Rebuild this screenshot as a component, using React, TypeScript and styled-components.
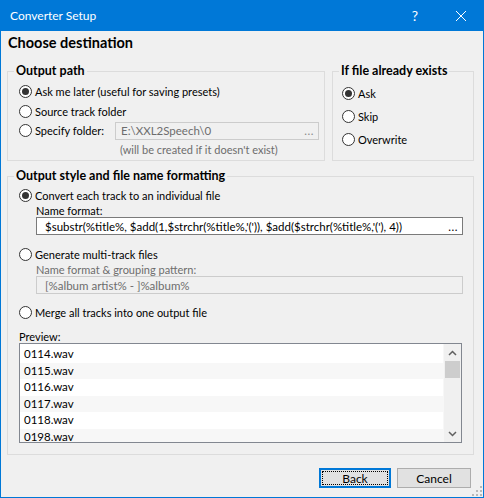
import React from "react";
import styled, { createGlobalStyle } from "styled-components";

const GlobalStyle = createGlobalStyle`
  html, body { margin: 0; padding: 0; background: #ffffff; }
  body { font-family: Lato, "Liberation Sans", sans-serif; font-size: 11px; color: #000; }
  * { box-sizing: border-box; }
`;

const Window = styled.div`
  position: relative;
  width: 484px;
  height: 498px;
  border: 1px solid #0078d7;
  border-top: none;
  background: #f0f0f0;
  display: flex;
  flex-direction: column;
`;

const TitleBar = styled.div`
  height: 31px;
  margin: 0 -1px;
  background: #0078d7;
  color: #fff;
  display: flex;
  align-items: center;
`;

const TitleText = styled.div`
  flex: 1;
  padding-left: 10px;
  font-size: 12px;
`;

const TitleButton = styled.div`
  width: 46px;
  height: 31px;
  display: flex;
  align-items: center;
  justify-content: center;
  font-size: 14px;
`;

const Content = styled.div`
  flex: 1;
  display: flex;
  flex-direction: column;
  padding: 0 9px 0 6px;
`;

const Heading = styled.div`
  margin-top: 4px;
  padding-left: 1px;
  height: 16px;
  line-height: 16px;
  font-size: 14.5px;
  font-weight: bold;
`;

const TopRow = styled.div`
  display: flex;
  gap: 7px;
  margin-top: 12px;
`;

const Group = styled.fieldset<{ $width?: number; $top?: number; $grow?: boolean }>`
  margin: ${(p) => p.$top ?? 0}px 0 0 0;
  padding: 0;
  min-width: 0;
  border: 1px solid #dcdcdc;
  ${(p) => (p.$width ? `width: ${p.$width}px;` : "")}
  ${(p) => (p.$grow ? "flex: 1;" : "")}
`;

const Legend = styled.legend`
  margin-left: 6px;
  padding: 0 2px;
  height: 16px;
  line-height: 16px;
  font-size: 12.5px;
  font-weight: bold;
`;

const GroupBody = styled.div<{ $pl: number; $pr?: number; $pt?: number; $pb?: number }>`
  display: flex;
  flex-direction: column;
  padding: ${(p) => p.$pt ?? 0}px ${(p) => p.$pr ?? 0}px ${(p) => p.$pb ?? 0}px ${(p) => p.$pl}px;
`;

const RadioRow = styled.div<{ $h: number; $top?: number }>`
  display: flex;
  align-items: center;
  gap: 3px;
  height: ${(p) => p.$h}px;
  margin-top: ${(p) => p.$top ?? 0}px;
  white-space: nowrap;
`;

const Circle = styled.span<{ $on?: boolean }>`
  width: 13px;
  height: 13px;
  flex: none;
  border-radius: 50%;
  border: 1px solid #333;
  background: #fff;
  display: inline-flex;
  align-items: center;
  justify-content: center;
  &::after {
    content: "";
    width: 7px;
    height: 7px;
    border-radius: 50%;
    background: ${(p) => (p.$on ? "#333" : "transparent")};
  }
`;

const FolderLabel = styled.span`
  width: 80px;
`;

const Field = styled.div<{ $disabled?: boolean; $pl: number; $width?: number }>`
  height: 18px;
  ${(p) => (p.$width ? `width: ${p.$width}px;` : "")}
  flex: ${(p) => (p.$width ? "none" : "1")};
  border: 1px solid ${(p) => (p.$disabled ? "#cccccc" : "#7a7a7a")};
  background: ${(p) => (p.$disabled ? "#f0f0f0" : "#ffffff")};
  color: ${(p) => (p.$disabled ? "#6d6d6d" : "#000")};
  display: flex;
  align-items: center;
  padding: 0 4px 0 ${(p) => p.$pl}px;
  font-size: 11.5px;
  white-space: nowrap;
  overflow: hidden;
`;

const FieldText = styled.span`
  flex: 1;
  overflow: hidden;
`;

const Dots = styled.span<{ $disabled?: boolean }>`
  color: ${(p) => (p.$disabled ? "#8a8a8a" : "#000")};
  letter-spacing: 0.5px;
`;

const Note = styled.div`
  height: 20px;
  line-height: 20px;
  padding-left: 101px;
  color: #6d6d6d;
`;

const Indented = styled.div<{ $grey?: boolean }>`
  margin-left: 17px;
  height: 13px;
  line-height: 13px;
  color: ${(p) => (p.$grey ? "#6d6d6d" : "#000")};
`;

const FieldRow = styled.div`
  margin-left: 17px;
  display: flex;
`;

const SmallLabel = styled.div`
  margin-top: 9px;
  height: 13px;
  line-height: 13px;
`;

const ListBox = styled.div`
  height: 100px;
  margin-right: 1px;
  border: 1px solid #828790;
  background: #fff;
  display: flex;
  overflow: hidden;
`;

const Rows = styled.div`
  flex: 1;
  padding-top: 2px;
  border-right: 1px solid #f7f7f7;
`;

const Row = styled.div<{ $alt: boolean }>`
  height: 16.5px;
  line-height: 16.5px;
  padding-left: 4px;
  font-size: 11.5px;
  background: ${(p) => (p.$alt ? "#f7f7f7" : "#fff")};
`;

const ScrollBar = styled.div`
  width: 17px;
  background: #f0f0f0;
  display: flex;
  flex-direction: column;
  align-items: center;
`;

const ArrowBox = styled.div`
  height: 17px;
  width: 17px;
  display: flex;
  align-items: center;
  justify-content: center;
`;

const Thumb = styled.div`
  width: 15px;
  height: 17px;
  background: #cdcdcd;
`;

const Track = styled.div`
  flex: 1;
`;

const Footer = styled.div`
  display: flex;
  justify-content: flex-end;
  gap: 6px;
  margin-top: 13px;
  margin-right: 3px;
`;

const Button = styled.div<{ $focused?: boolean; $width: number }>`
  width: ${(p) => p.$width}px;
  height: 20px;
  background: #e1e1e1;
  border: 1px solid ${(p) => (p.$focused ? "#0078d7" : "#adadad")};
  ${(p) => (p.$focused ? "box-shadow: inset 0 0 0 1px #0078d7;" : "")}
  padding: 2px;
  display: flex;
`;

const ButtonFace = styled.div<{ $focused?: boolean }>`
  flex: 1;
  display: flex;
  align-items: center;
  justify-content: center;
  border: 1px dotted ${(p) => (p.$focused ? "#000" : "transparent")};
  font-size: 12px;
`;

const Grip = styled.svg`
  position: absolute;
  right: 1px;
  bottom: 1px;
`;

const Chevron = ({ up }: { up?: boolean }) => (
  <svg width="9" height="6" viewBox="0 0 9 6">
    <path
      d={up ? "M1 5 L4.5 1.5 L8 5" : "M1 1 L4.5 4.5 L8 1"}
      fill="none"
      stroke="#606060"
      strokeWidth="1.5"
    />
  </svg>
);

const Radio = ({ on, h, top, children }: { on?: boolean; h: number; top?: number; children: React.ReactNode }) => (
  <RadioRow $h={h} $top={top}>
    <Circle $on={on} />
    {children}
  </RadioRow>
);

const files = ["0114.wav", "0115.wav", "0116.wav", "0117.wav", "0118.wav", "0198.wav"];

export default function App() {
  return (
    <>
      <GlobalStyle />
      <Window>
        <TitleBar>
          <TitleText>Converter Setup</TitleText>
          <TitleButton>?</TitleButton>
          <TitleButton>
            <svg width="10" height="10" viewBox="0 0 10 10">
              <path d="M0 0 L10 10 M10 0 L0 10" stroke="#fff" strokeWidth="1" />
            </svg>
          </TitleButton>
        </TitleBar>
        <Content>
          <Heading>Choose destination</Heading>
          <TopRow>
            <Group $width={318}>
              <Legend>Output path</Legend>
              <GroupBody $pl={11} $pr={5} $pt={2}>
                <Radio on h={20}>Ask me later (useful for saving presets)</Radio>
                <Radio h={20}>Source track folder</Radio>
                <Radio h={19}>
                  <FolderLabel>Specify folder:</FolderLabel>
                  <Field $disabled $pl={5} $width={204}>
                    <FieldText>E:\XXL2Speech\0</FieldText>
                    <Dots $disabled>...</Dots>
                  </Field>
                </Radio>
                <Note>(will be created if it doesn't exist)</Note>
              </GroupBody>
            </Group>
            <Group $grow>
              <Legend>If file already exists</Legend>
              <GroupBody $pl={9} $pt={3}>
                <Radio on h={23}>Ask</Radio>
                <Radio h={23}>Skip</Radio>
                <Radio h={23}>Overwrite</Radio>
              </GroupBody>
            </Group>
          </TopRow>
          <Group $top={7}>
            <Legend>Output style and file name formatting</Legend>
            <GroupBody $pl={11} $pr={10} $pt={2} $pb={11}>
              <Radio on h={18}>Convert each track to an individual file</Radio>
              <Indented>Name format:</Indented>
              <FieldRow>
                <Field $pl={8}>
                  <FieldText>$substr(%title%, $add(1,$strchr(%title%,'(')), $add($strchr(%title%,'('), 4))</FieldText>
                  <Dots>...</Dots>
                </Field>
              </FieldRow>
              <Radio h={18} top={10}>Generate multi-track files</Radio>
              <Indented $grey>Name format &amp; grouping pattern:</Indented>
              <FieldRow>
                <Field $disabled $pl={8}>
                  <FieldText>[%album artist% - ]%album%</FieldText>
                </Field>
              </FieldRow>
              <Radio h={18} top={9}>Merge all tracks into one output file</Radio>
              <SmallLabel>Preview:</SmallLabel>
              <ListBox>
                <Rows>
                  {files.map((f, i) => (
                    <Row key={f} $alt={i % 2 === 1}>{f}</Row>
                  ))}
                </Rows>
                <ScrollBar>
                  <ArrowBox><Chevron up /></ArrowBox>
                  <Thumb />
                  <Track />
                  <ArrowBox><Chevron /></ArrowBox>
                </ScrollBar>
              </ListBox>
            </GroupBody>
          </Group>
          <Footer>
            <Button $focused $width={72}>
              <ButtonFace $focused>Back</ButtonFace>
            </Button>
            <Button $width={74}>
              <ButtonFace>Cancel</ButtonFace>
            </Button>
          </Footer>
        </Content>
        <Grip width="10" height="10" viewBox="0 0 10 10">
          {[
            [8, 0], [8, 4], [4, 4], [8, 8], [4, 8], [0, 8],
          ].map(([x, y]) => (
            <rect key={`${x}-${y}`} x={x} y={y} width="2" height="2" fill="#b9b9b9" />
          ))}
        </Grip>
      </Window>
    </>
  );
}
